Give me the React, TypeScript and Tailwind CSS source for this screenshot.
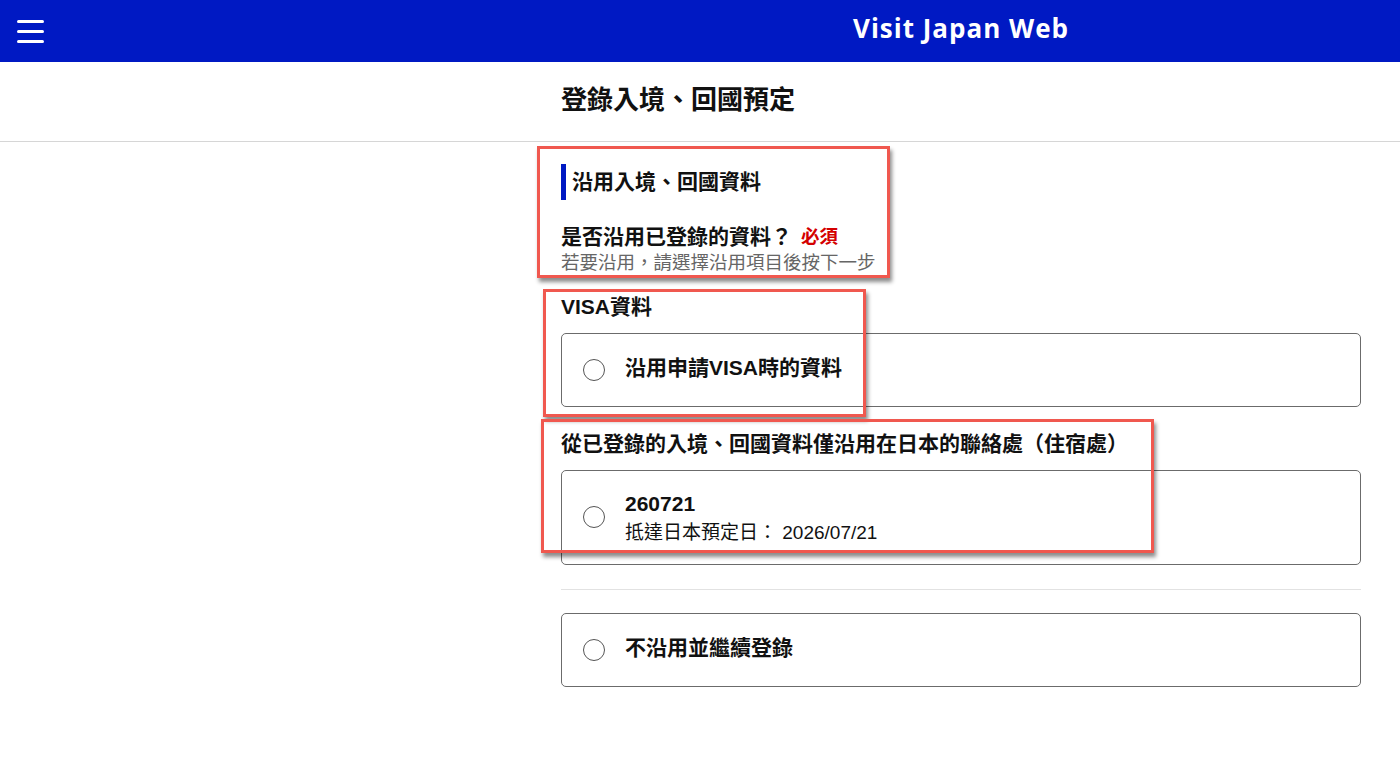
import { useState } from 'react';

const font = { fontFamily: '"Liberation Sans", "Noto Sans CJK TC", sans-serif' };

function Radio({ checked }: { checked: boolean }) {
  return (
    <span className="flex h-[22px] w-[22px] shrink-0 items-center justify-center rounded-full border border-[#555] bg-white">
      {checked && <span className="h-[12px] w-[12px] rounded-full bg-[#0019c3]" />}
    </span>
  );
}

function Option({
  id,
  selected,
  onSelect,
  children,
  tall,
}: {
  id: string;
  selected: string;
  onSelect: (id: string) => void;
  children: React.ReactNode;
  tall?: boolean;
}) {
  return (
    <button
      onClick={() => onSelect(id)}
      className={`flex w-full items-center gap-[20px] rounded-[5px] border border-[#6b6b6b] bg-white pl-[21px] text-left ${
        tall ? 'h-[95px]' : 'h-[74px]'
      }`}
    >
      <Radio checked={selected === id} />
      <div>{children}</div>
    </button>
  );
}

export default function App() {
  const [selected, setSelected] = useState('');

  return (
    <div className="min-h-[784px] bg-white text-[#111]" style={font}>
      {/* Header */}
      <header className="flex h-[62px] items-center bg-[#0019c3]">
        <button className="flex w-[561px] shrink-0 flex-col gap-[7px] pl-[17px]">
          <span className="block h-[3px] w-[27px] rounded bg-white" />
          <span className="block h-[3px] w-[27px] rounded bg-white" />
          <span className="block h-[3px] w-[27px] rounded bg-white" />
        </button>
        <div className="flex w-[800px] justify-center">
          <span
            className="pb-[6px] text-[26px] font-bold tracking-[1px] text-white"
            style={{ fontFamily: '"Open Sans", "Noto Sans", sans-serif' }}
          >
            Visit Japan Web
          </span>
        </div>
      </header>

      {/* Title */}
      <div className="flex h-[80px] items-center border-b border-[#d6d6d6] pl-[561px]">
        <h1 className="pb-[2px] text-[26px] font-bold">登錄入境、回國預定</h1>
      </div>

      {/* Content */}
      <main className="relative pl-[561px] pr-[39px]">
        <div className="w-[800px]">
          <div className="flex items-center pt-[22px]">
            <span className="h-[36px] w-[5px] bg-[#0019c3]" />
            <h2 className="pl-[6px] text-[21px] font-bold">沿用入境、回國資料</h2>
          </div>

          <div className="mt-[21px] flex items-center gap-[9px]">
            <span className="text-[21px] font-bold">是否沿用已登錄的資料？</span>
            <span className="text-[18.5px] font-bold text-[#d40000]">必須</span>
          </div>
          <p className="-mt-[2px] text-[18.5px] leading-[24px] text-[#666]">若要沿用，請選擇沿用項目後按下一步</p>

          <h3 className="mt-[19px] text-[21px] font-bold leading-[26px]">VISA資料</h3>
          <div className="mt-[13px]">
            <Option id="visa" selected={selected} onSelect={setSelected}>
              <span className="relative -top-[2px] text-[21px] font-bold">沿用申請VISA時的資料</span>
            </Option>
          </div>

          <h3 className="mt-[23px] text-[21px] font-bold leading-[28px]">
            從已登錄的入境、回國資料僅沿用在日本的聯絡處（住宿處）
          </h3>
          <div className="mt-[12px]">
            <Option id="260721" selected={selected} onSelect={setSelected} tall>
              <div className="pt-[4px] text-[21px] font-bold leading-[28px]">260721</div>
              <div className="text-[19px] leading-[30px]">抵達日本預定日： 2026/07/21</div>
            </Option>
          </div>

          <hr className="mt-[24px] border-[#e2e2e2]" />

          <div className="mt-[23px]">
            <Option id="none" selected={selected} onSelect={setSelected}>
              <span className="relative -top-[2px] text-[21px] font-bold">不沿用並繼續登錄</span>
            </Option>
          </div>
        </div>

        {/* Annotation boxes */}
        <div className="pointer-events-none absolute left-[537px] top-[4px] h-[132px] w-[353px] border-[3px] border-[#f0584f] shadow-[2px_4px_4px_rgba(0,0,0,0.45)]" />
        <div className="pointer-events-none absolute left-[543px] top-[147px] h-[128px] w-[323px] border-[3px] border-[#f0584f] shadow-[2px_4px_4px_rgba(0,0,0,0.45)]" />
        <div className="pointer-events-none absolute left-[541px] top-[277px] h-[134px] w-[613px] border-[3px] border-[#f0584f] shadow-[2px_4px_4px_rgba(0,0,0,0.45)]" />
      </main>
    </div>
  );
}
